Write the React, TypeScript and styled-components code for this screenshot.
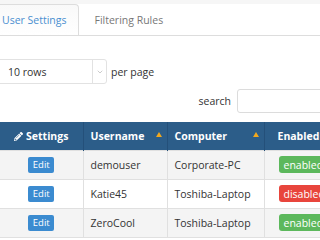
import React from 'react';
import styled, { createGlobalStyle } from 'styled-components';
import { FaPencilAlt } from 'react-icons/fa';
import { ChevronDown } from 'lucide-react';

const GlobalStyle = createGlobalStyle`
  html, body {
    margin: 0;
    padding: 0;
    background: #ffffff;
    overflow: hidden;
  }

  body {
    font-family: 'Open Sans', 'Liberation Sans', sans-serif;
    color: #333333;
  }
`;

const Page = styled.div`
  width: 440px;
`;

const TopStrip = styled.div`
  height: 4px;
  background: #f6f6f6;
`;

const TabBar = styled.div`
  display: flex;
  height: 31px;
  border-bottom: 1px solid #dddddd;
`;

const Tab = styled.div<{ $active?: boolean }>`
  display: flex;
  align-items: center;
  padding: 0 11px;
  margin-left: ${(p) => (p.$active ? '-10px' : '4px')};
  font-size: 10.5px;
  color: ${(p) => (p.$active ? '#4a8fd0' : '#777777')};
  border: 1px solid ${(p) => (p.$active ? '#dddddd' : 'transparent')};
  border-bottom: none;
  border-radius: 4px 4px 0 0;
  background: ${(p) => (p.$active ? 'linear-gradient(#f9f9f9, #ffffff)' : 'transparent')};
  margin-bottom: -1px;
  height: 31px;
  box-sizing: border-box;
`;

const RowsLine = styled.div`
  display: flex;
  align-items: center;
  gap: 4px;
  margin-top: 23px;
  font-size: 10.5px;
`;

const Select = styled.div`
  display: flex;
  width: 111px;
  height: 25px;
  margin-left: -4px;
  box-sizing: border-box;
  border: 1px solid #e2e2e2;
  border-radius: 3px;
  background: #ffffff;
`;

const SelectValue = styled.div`
  flex: 1;
  display: flex;
  align-items: center;
  padding-left: 11px;
  font-size: 10.5px;
  color: #333333;
`;

const SelectArrow = styled.div`
  width: 13px;
  display: flex;
  align-items: center;
  justify-content: center;
  border-left: 1px solid #e2e2e2;
  color: #999999;
`;

const SearchLine = styled.div`
  display: flex;
  align-items: center;
  justify-content: flex-end;
  gap: 6px;
  margin-top: 5px;
  font-size: 10.5px;
`;

const SearchInput = styled.div`
  width: 203px;
  height: 24px;
  box-sizing: border-box;
  border: 1px solid #dcdcdc;
  border-radius: 3px;
`;

const Table = styled.table`
  margin-top: 9px;
  border-collapse: collapse;
  width: 440px;
  table-layout: fixed;
  font-size: 10.5px;
`;

const Th = styled.th<{ $w?: number; $center?: boolean; $pad?: number }>`
  box-sizing: border-box;
  width: ${(p) => (p.$w ? `${p.$w}px` : 'auto')};
  height: 28px;
  padding: 0 ${(p) => (p.$center ? 0 : p.$pad ?? 7)}px;
  background: #2c5d89;
  color: #ffffff;
  font-weight: 700;
  font-size: 10.5px;
  text-align: ${(p) => (p.$center ? 'center' : 'left')};
  border-left: 1px solid #24507a;
  position: relative;

  &:first-child {
    border-left: none;
  }
`;

const SortMark = styled.span`
  position: absolute;
  right: 5px;
  top: 10px;
  width: 0;
  height: 0;
  border-left: 3px solid transparent;
  border-right: 3px solid transparent;
  border-bottom: 5px solid #f2a81d;
`;

const Tr = styled.tr<{ $striped?: boolean }>`
  background: ${(p) => (p.$striped ? '#f4f4f4' : '#ffffff')};
`;

const Td = styled.td<{ $center?: boolean; $pad?: number }>`
  height: 28px;
  padding: 0 ${(p) => (p.$center ? 0 : p.$pad ?? 7)}px;
  text-align: ${(p) => (p.$center ? 'center' : 'left')};
  border: 1px solid #e0e0e0;
  color: #333333;

  &:first-child {
    border-left: none;
  }
`;

const EditButton = styled.span`
  display: inline-flex;
  align-items: center;
  justify-content: center;
  width: 26px;
  height: 16px;
  border-radius: 2px;
  background: #3b8bd0;
  color: #ffffff;
  font-size: 9.5px;
  vertical-align: middle;
`;

const Badge = styled.span<{ $on: boolean }>`
  display: inline-flex;
  align-items: center;
  height: 17px;
  padding: 0 5px;
  border-radius: 3px;
  background: ${(p) => (p.$on ? '#5cb85c' : '#e8453c')};
  color: #ffffff;
  font-size: 10.5px;
  vertical-align: middle;
`;

const Pencil = styled(FaPencilAlt)`
  margin-right: 3px;
  vertical-align: -1px;
`;

const users = [
  { name: 'demouser', computer: 'Corporate-PC', enabled: true },
  { name: 'Katie45', computer: 'Toshiba-Laptop', enabled: false },
  { name: 'ZeroCool', computer: 'Toshiba-Laptop', enabled: true },
];

const App: React.FC = () => {
  return (
    <>
      <GlobalStyle />
      <Page>
        <TopStrip />
        <TabBar>
          <Tab $active>User Settings</Tab>
          <Tab>Filtering Rules</Tab>
        </TabBar>

        <RowsLine>
          <Select>
            <SelectValue>10 rows</SelectValue>
            <SelectArrow>
              <ChevronDown size={8} strokeWidth={1.5} />
            </SelectArrow>
          </Select>
          per page
        </RowsLine>

        <SearchLine>
          search
          <SearchInput />
        </SearchLine>

        <Table>
          <thead>
            <tr>
              <Th $w={83} $center>
                <Pencil size={9} />
                Settings
              </Th>
              <Th $w={84}>
                Username
                <SortMark />
              </Th>
              <Th $w={97}>
                Computer
                <SortMark />
              </Th>
              <Th $pad={13}>Enabled</Th>
            </tr>
          </thead>
          <tbody>
            {users.map((u, i) => (
              <Tr key={u.name} $striped={i % 2 === 0}>
                <Td $center>
                  <EditButton>Edit</EditButton>
                </Td>
                <Td>{u.name}</Td>
                <Td>{u.computer}</Td>
                <Td $pad={14}>
                  <Badge $on={u.enabled}>{u.enabled ? 'enabled' : 'disabled'}</Badge>
                </Td>
              </Tr>
            ))}
          </tbody>
        </Table>
      </Page>
    </>
  );
};

export default App;
